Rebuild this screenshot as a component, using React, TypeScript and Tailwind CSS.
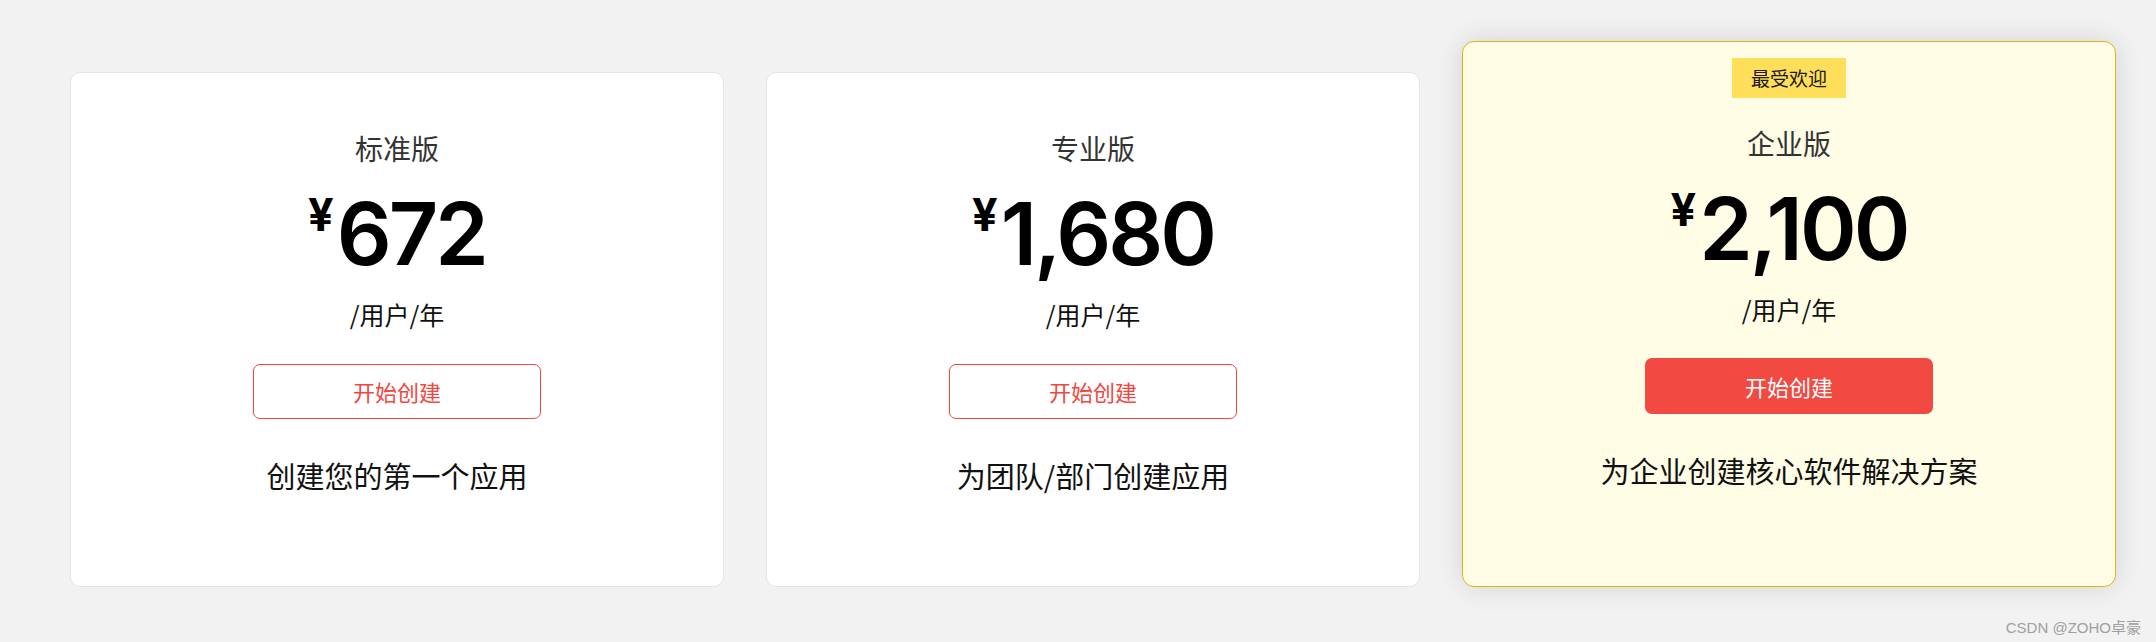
import React from "react";

type Plan = {
  name: string;
  price: string;
  desc: string;
  featured?: boolean;
};

const plans: Plan[] = [
  { name: "标准版", price: "672", desc: "创建您的第一个应用" },
  { name: "专业版", price: "1,680", desc: "为团队/部门创建应用" },
  { name: "企业版", price: "2,100", desc: "为企业创建核心软件解决方案", featured: true },
];

const cjk = "font-['Noto_Sans_CJK_SC','Noto_Sans',sans-serif]";

function Card({ plan }: { plan: Plan }) {
  const featured = !!plan.featured;
  return (
    <div
      className={
        featured
          ? "flex-1 flex flex-col items-center rounded-[12px] border border-[#e4b20e] bg-[#fffde6] pt-[16px] pb-[96px] shadow-[0_0_28px_rgba(0,0,0,0.13)]"
          : "flex-1 flex flex-col items-center rounded-[10px] border border-[#e4e4e4] bg-white pt-[57px] pb-[91px]"
      }
    >
      {featured && (
        <div className={`${cjk} mb-[27px] h-[40px] bg-[#ffde59] px-[19px] text-[19px] leading-[40px] text-[#1a1a1a]`}>
          最受欢迎
        </div>
      )}
      <div className={`${cjk} text-[28px] leading-[36px] text-[#333333]`}>{plan.name}</div>
      <div className="mt-[25px] flex items-start font-['Inter',sans-serif] font-semibold text-black">
        <span className="mr-[3px] mt-[2px] text-[45px] font-bold leading-[44px]">¥</span>
        <span className="text-[86px] leading-[86px] tracking-[-0.035em]">{plan.price}</span>
      </div>
      <div className={`${cjk} mt-[21px] text-[25px] leading-[32px] text-[#111111]`}>/用户/年</div>
      <button
        className={
          featured
            ? `${cjk} mt-[33px] h-[56px] w-[288px] rounded-[7px] bg-[#f24a42] text-[22px] text-white`
            : `${cjk} mt-[34px] h-[55px] w-[288px] rounded-[7px] border border-[#f0473f] bg-white text-[22px] text-[#f0473f]`
        }
      >
        开始创建
      </button>
      <div className={`${cjk} mt-[36px] text-[29px] leading-[40px] text-[#111111]`}>{plan.desc}</div>
    </div>
  );
}

export default function App() {
  return (
    <div className="relative min-h-[642px] w-full bg-[#f2f2f2]">
      <div className="flex items-end gap-[42px] pl-[70px] pr-[40px] pt-[41px] pb-[56px]">
        {plans.map((p) => (
          <Card key={p.name} plan={p} />
        ))}
      </div>
      <div className={`absolute bottom-[6px] right-[15px] font-['Liberation_Sans','Noto_Sans_CJK_SC',sans-serif] text-[15px] leading-[18px] text-[#a0a0a0]`}>
        CSDN @ZOHO卓豪
      </div>
    </div>
  );
}
